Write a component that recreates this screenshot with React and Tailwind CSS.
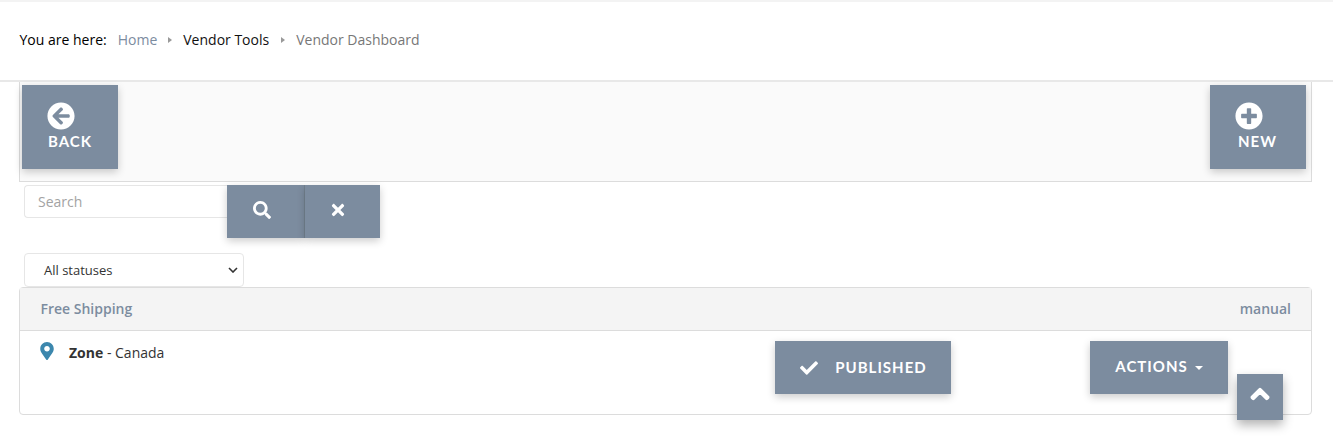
import { FaArrowCircleLeft, FaCheck, FaChevronUp, FaMapMarkerAlt, FaPlusCircle, FaSearch, FaTimes } from 'react-icons/fa';

const SHADOW = 'shadow-[0_3px_8px_rgba(0,0,0,0.2)]';

function ToolbarButton({ icon: Icon, label, labelClass }) {
  return (
    <button className={`flex h-[84px] w-24 flex-col items-start bg-[#7c8c9f] pl-[25px] pt-[17px] text-white ${SHADOW}`}>
      <Icon className="size-7" />
      <span className={`font-['Lato',sans-serif] text-[15px] leading-[22px] font-bold tracking-[1px] ${labelClass}`}>{label}</span>
    </button>
  );
}

function SquareButton({ children, className }) {
  return (
    <button className={`flex h-[53px] items-center justify-center bg-[#7c8c9f] text-white ${SHADOW} ${className}`}>
      {children}
    </button>
  );
}

export default function App() {
  return (
    <div className="relative h-[445px] overflow-hidden bg-white font-['Open_Sans',sans-serif] text-sm text-[#212529]">
      <header className="flex h-[82px] items-center border-t-2 border-b-2 border-t-[#f3f3f3] border-b-[#e8e8e8] pb-[2px] pl-[19.5px] text-[14px]">
        <span className="mr-[11px] text-black">You are here:</span>
        <a className="text-[#7c8c9f]">Home</a>
        <span className="mx-[11px] h-0 w-0 border-y-[3.5px] border-l-[4px] border-y-transparent border-l-[#999]" />
        <span className="text-[#111]">Vendor Tools</span>
        <span className="mx-[11.5px] h-0 w-0 border-y-[3.5px] border-l-[4px] border-y-transparent border-l-[#999]" />
        <span className="text-[#777]">Vendor Dashboard</span>
      </header>

      <main className="mx-[19px] w-[1293px]">
        <div className="flex h-[100px] items-start justify-between border border-t-0 border-[#dcdcdc] bg-[#fafafa] pr-[5px] pl-[2px] pt-[3px]">
          <ToolbarButton icon={FaArrowCircleLeft} label="BACK" labelClass="ml-px" />
          <ToolbarButton icon={FaPlusCircle} label="NEW" labelClass="ml-[3px]" />
        </div>

        <div className="mt-[3px] ml-[5px] flex h-[53px] items-start">
          <input
            placeholder="Search"
            className="h-[33px] w-[203px] rounded-l border border-r-0 border-[#e6e6e6] bg-white px-[13px] text-[14px] outline-none placeholder:text-[#a3a3a3]"
          />
          <SquareButton className="w-[78px] border-r border-[#73828f] pr-[7px] pb-[3px]">
            <FaSearch className="size-[18px]" />
          </SquareButton>
          <SquareButton className="w-[75px] pr-[10px] pb-[3px]">
            <FaTimes className="size-[18px]" />
          </SquareButton>
        </div>

        <div className="mt-[15px] ml-[5px] flex h-[34px] w-[220px] items-center justify-between rounded border border-[#e6e6e6] bg-white pr-[5px] pl-[19px] text-[13px] text-[#333]">
          All statuses
          <svg width="10" height="6" viewBox="0 0 10 6" fill="none" stroke="#333" strokeWidth="1.6">
            <path d="M1 1l4 4 4-4" />
          </svg>
        </div>

        <section className="h-[128px] rounded border border-[#dcdcdc]">
          <div className="flex h-[43px] items-center justify-between border-b border-[#dcdcdc] bg-[#f4f4f4] pr-[20px] pl-[20.5px] font-semibold text-[#7c8c9f]">
            <span>Free Shipping</span>
            <span className="text-[14px]">manual</span>
          </div>
          <div className="flex items-start pt-[10px] pl-[20px]">
            <div className="flex w-[735px] items-center pt-[2px] text-[14px] text-[#333]">
              <FaMapMarkerAlt className="-mt-[5px] mr-[15px] h-[18px] w-[14px] text-[#3c87ad]" />
              <span>
                <b className="font-bold">Zone</b> - Canada
              </span>
            </div>
            <SquareButton className="w-[176px] gap-[17px] pl-px font-['Lato',sans-serif] text-[15px] font-bold tracking-[1px]">
              <FaCheck className="size-[18px]" />
              PUBLISHED
            </SquareButton>
            <SquareButton className="ml-[139px] w-[138px] gap-[7px] pb-[2px] font-['Lato',sans-serif] text-[15px] font-bold tracking-[1px]">
              ACTIONS
              <span className="mt-[3px] h-0 w-0 border-x-[4px] border-t-[4px] border-x-transparent border-t-white" />
            </SquareButton>
          </div>
        </section>
      </main>

      <button className="absolute top-[374px] left-[1237px] flex size-[46px] items-center justify-center bg-[#7c8c9f] pb-[6px] text-white shadow-[0_5px_10px_rgba(0,0,0,0.3)]">
        <FaChevronUp className="size-[20px]" stroke="currentColor" strokeWidth="50" />
      </button>
    </div>
  );
}
